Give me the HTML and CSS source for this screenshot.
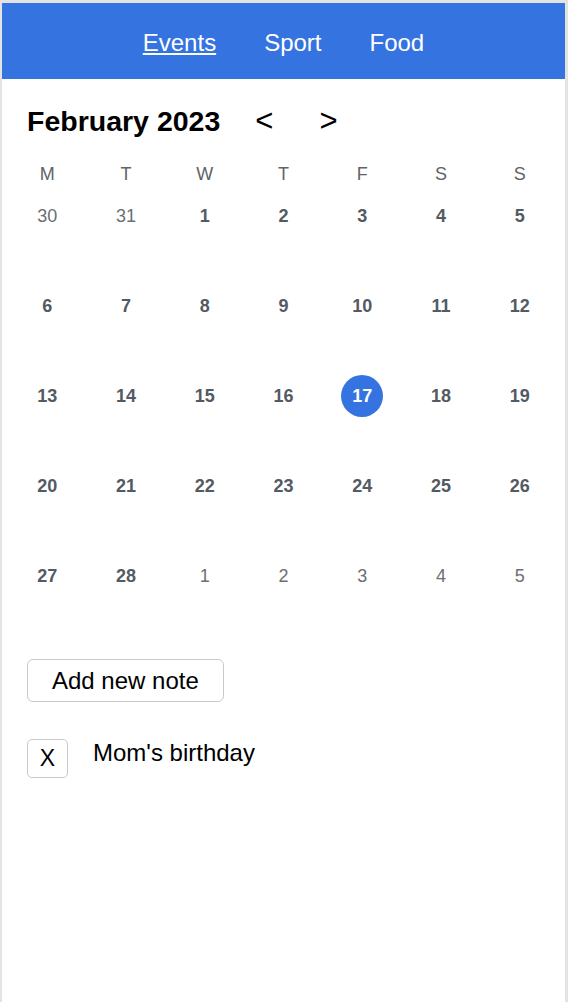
FILE: index.html
```html
<!DOCTYPE html>
<html lang="en">
<head>
<meta charset="utf-8">
<title>Calendar</title>
<link rel="stylesheet" href="styles.css">
</head>
<body>
<div class="page">
  <header class="topbar">
    <nav class="nav">
      <a class="nav-link active" href="#">Events</a>
      <a class="nav-link" href="#">Sport</a>
      <a class="nav-link" href="#">Food</a>
    </nav>
  </header>
  <main class="content">
    <div class="month-row">
      <h1 class="month-title">February 2023</h1>
      <button class="arrow prev" type="button">&lt;</button>
      <button class="arrow next" type="button">&gt;</button>
    </div>
    <div class="calendar">
      <div class="weekdays">
        <span>M</span><span>T</span><span>W</span><span>T</span><span>F</span><span>S</span><span>S</span>
      </div>
      <div class="days">
        <span class="day other">30</span><span class="day other">31</span><span class="day">1</span><span class="day">2</span><span class="day">3</span><span class="day">4</span><span class="day">5</span>
        <span class="day">6</span><span class="day">7</span><span class="day">8</span><span class="day">9</span><span class="day">10</span><span class="day">11</span><span class="day">12</span>
        <span class="day">13</span><span class="day">14</span><span class="day">15</span><span class="day">16</span><span class="day selected">17</span><span class="day">18</span><span class="day">19</span>
        <span class="day">20</span><span class="day">21</span><span class="day">22</span><span class="day">23</span><span class="day">24</span><span class="day">25</span><span class="day">26</span>
        <span class="day">27</span><span class="day">28</span><span class="day other">1</span><span class="day other">2</span><span class="day other">3</span><span class="day other">4</span><span class="day other">5</span>
      </div>
    </div>
    <div class="notes">
      <button class="add-note" type="button">Add new note</button>
      <div class="note">
        <button class="remove" type="button">X</button>
        <span class="note-text">Mom's birthday</span>
      </div>
    </div>
  </main>
</div>
</body>
</html>
```

FILE: styles.css
```css
html, body {
  margin: 0;
  padding: 0;
}

body {
  background: #e3e3e3;
  font-family: "Liberation Sans", Arial, Helvetica, sans-serif;
  color: #000;
}

.page {
  margin: 3px 3px 0 2px;
  background: #fff;
  min-height: 999px;
  display: flex;
  flex-direction: column;
}

.topbar {
  background: #3574e0;
  height: 76px;
  display: flex;
  align-items: center;
  justify-content: center;
}

.nav {
  display: flex;
  gap: 48px;
  padding-top: 4px;
}

.nav-link {
  color: #fff;
  font-size: 24px;
  line-height: 28px;
  text-decoration: none;
}

.nav-link.active {
  text-decoration: underline;
  text-underline-offset: 2px;
}

.content {
  display: flex;
  flex-direction: column;
}

.month-row {
  display: flex;
  align-items: center;
  height: 32px;
  margin-top: 26px;
  padding-left: 25px;
}

.month-title {
  margin: 0;
  font-size: 28.5px;
  font-weight: bold;
  line-height: 32px;
}

.arrow {
  background: none;
  border: none;
  padding: 0;
  font-family: inherit;
  font-size: 31px;
  line-height: 32px;
  color: #000;
  cursor: pointer;
}

.arrow.prev {
  margin-left: 35px;
}

.arrow.next {
  margin-left: 46px;
}

.calendar {
  padding: 0 6px;
  margin-top: 27px;
}

.weekdays,
.days {
  display: grid;
  grid-template-columns: repeat(7, 1fr);
  justify-items: center;
}

.weekdays span {
  font-size: 18px;
  line-height: 20px;
  color: #5f6368;
}

.days {
  margin-top: 11px;
  row-gap: 48px;
}

.day {
  width: 42px;
  height: 42px;
  line-height: 42px;
  text-align: center;
  border-radius: 50%;
  font-size: 18px;
  font-weight: bold;
  color: #535a63;
}

.day.other {
  font-weight: normal;
  color: #6b6e72;
}

.day.selected {
  background: #3574e0;
  color: #fff;
}

.notes {
  padding-left: 25px;
  margin-top: 62px;
  display: flex;
  flex-direction: column;
  align-items: flex-start;
  gap: 37px;
}

.add-note {
  height: 43px;
  padding: 0 24px;
  background: #fff;
  border: 1px solid #c9c9c9;
  border-radius: 6px;
  font-family: inherit;
  font-size: 24px;
  color: #000;
}

.note {
  display: flex;
  align-items: flex-start;
  gap: 25px;
}

.remove {
  width: 41px;
  height: 39px;
  padding: 0;
  background: #fff;
  border: 1px solid #c9c9c9;
  border-radius: 5px;
  font-family: inherit;
  font-size: 23px;
  color: #000;
  display: flex;
  align-items: center;
  justify-content: center;
}

.note-text {
  font-size: 24px;
  line-height: 28px;
}
```
